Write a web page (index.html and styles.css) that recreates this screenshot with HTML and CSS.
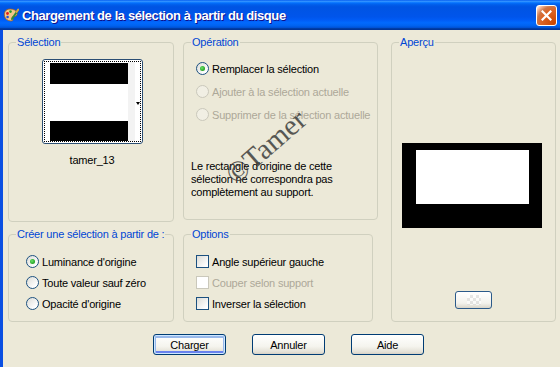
FILE: index.html
```html
<!DOCTYPE html>
<html lang="fr">
<head>
<meta charset="utf-8">
<title>Chargement de la sélection à partir du disque</title>
<link rel="stylesheet" href="styles.css">
</head>
<body>
<div class="window">
  <div class="titlebar">
    <svg class="app-icon" width="16" height="16" viewBox="0 0 16 16">
      <path d="M7 2 C2 2 1 6 1.5 9 C2 12 5 14 8 14 C10 14 10.5 12.5 9.5 11.5 C8.5 10.5 9 9.5 10.5 9.5 C13 9.5 14.5 8.5 14 6 C13.5 3.5 10.5 2 7 2 Z" fill="#F2C78A" stroke="#9A5A1E" stroke-width="0.8"/>
      <circle cx="4.5" cy="6.5" r="1.4" fill="#E0201C"/>
      <circle cx="7.5" cy="4.6" r="1.3" fill="#2A9B2A"/>
      <circle cx="4.6" cy="10" r="1.3" fill="#2050D8"/>
      <path d="M9 12 L15 3" stroke="#2E8B3A" stroke-width="2" stroke-linecap="round"/>
      <path d="M13.6 5 L15.2 2.6" stroke="#D9A640" stroke-width="2" stroke-linecap="round"/>
    </svg>
    <span class="title">Chargement de la sélection à partir du disque</span>
    <div class="close">
      <svg width="11" height="11" viewBox="0 0 11 11"><path d="M1.5 1.5 L9.5 9.5 M9.5 1.5 L1.5 9.5" stroke="#fff" stroke-width="2.2" stroke-linecap="square"/></svg>
    </div>
  </div>
  <div class="client">
    <div class="groups">
      <fieldset class="group g-selection">
        <legend>Sélection</legend>
        <div class="thumb">
          <div class="thumb-focus">
            <div class="thumb-img">
              <div class="bar bar-top"></div>
              <div class="bar bar-bottom"></div>
            </div>
            <div class="thumb-strip"></div>
            <div class="thumb-arrow"></div>
          </div>
        </div>
        <div class="thumb-name">tamer_13</div>
      </fieldset>

      <fieldset class="group g-operation">
        <legend>Opération</legend>
        <div class="opt-list op-list">
          <div class="opt"><span class="radio checked"><span class="dot"></span></span><span>Remplacer la sélection</span></div>
          <div class="opt disabled"><span class="radio"></span><span>Ajouter à la sélection actuelle</span></div>
          <div class="opt disabled"><span class="radio"></span><span>Supprimer de la sélection actuelle</span></div>
        </div>
        <p class="note">Le rectangle d'origine de cette<br>sélection ne correspondra pas<br>complètement au support.</p>
        <span class="watermark">©Tamer</span>
      </fieldset>

      <fieldset class="group g-preview">
        <legend>Aperçu</legend>
        <div class="preview"><div class="preview-inner"></div></div>
        <div class="mini-btn"><span class="checker"></span></div>
      </fieldset>

      <fieldset class="group g-create">
        <legend>Créer une sélection à partir de :</legend>
        <div class="opt-list create-list">
          <div class="opt"><span class="radio checked"><span class="dot"></span></span><span>Luminance d'origine</span></div>
          <div class="opt"><span class="radio"></span><span>Toute valeur sauf zéro</span></div>
          <div class="opt"><span class="radio"></span><span>Opacité d'origine</span></div>
        </div>
      </fieldset>

      <fieldset class="group g-options">
        <legend>Options</legend>
        <div class="opt-list options-list">
          <div class="opt"><span class="check"></span><span>Angle supérieur gauche</span></div>
          <div class="opt disabled"><span class="check"></span><span>Couper selon support</span></div>
          <div class="opt"><span class="check"></span><span>Inverser la sélection</span></div>
        </div>
      </fieldset>
    </div>
    <div class="buttons">
      <button class="btn default">Charger</button>
      <button class="btn">Annuler</button>
      <button class="btn">Aide</button>
    </div>
  </div>
</div>
</body>
</html>
```

FILE: styles.css
```css
* { box-sizing: border-box; }
html, body { margin: 0; padding: 0; }
body {
  width: 560px;
  height: 367px;
  overflow: hidden;
  font-family: "Liberation Sans", Arial, sans-serif;
  font-size: 11px;
  letter-spacing: -0.2px;
  color: #000;
  background: #ECE9D8;
}
.window {
  width: 560px;
  height: 367px;
  display: flex;
  flex-direction: column;
  background: #ECE9D8;
}
.titlebar {
  height: 30px;
  flex: none;
  display: flex;
  align-items: center;
  padding-left: 3px;
  background: linear-gradient(to bottom, #0058EE 0%, #3593FF 4%, #288EFF 6%, #127DFF 8%, #036FFC 10%, #0262EE 14%, #0057E5 20%, #0054E3 24%, #0055EB 56%, #005BF5 66%, #026AFE 76%, #0062EF 86%, #0052D6 92%, #0040AB 94%, #003092 100%);
}
.app-icon { flex: none; margin-top: -1px; }
.title {
  margin-left: 3px;
  color: #fff;
  font-weight: bold;
  font-size: 13px;
  letter-spacing: -0.4px;
  text-shadow: 1px 1px 0 #0F1089;
}
.close {
  margin-left: auto;
  margin-right: 3px;
  width: 21px;
  height: 21px;
  border: 1px solid #fff;
  border-radius: 3px;
  display: flex;
  align-items: center;
  justify-content: center;
  background: radial-gradient(circle at 90% 90%, #CC4600 0%, #DC6527 55%, #CD7546 70%, #FFCCB2 90%, #fff 100%);
}
.client {
  flex: 1;
  border-left: 3px solid #0A4FE2;
  display: flex;
  flex-direction: column;
}
.groups {
  display: grid;
  grid-template-columns: 166px 195px 169px;
  grid-template-rows: 186px 94px;
  column-gap: 9px;
  row-gap: 6px;
  padding: 6px 0 0 5px;
}
.group {
  margin: 0;
  padding: 0;
  min-width: 0;
  border: 1px solid #D0D0BF;
  border-radius: 4px;
  position: relative;
}
.group legend {
  margin-left: 7px;
  padding: 0 1px;
  color: #0046D5;
  line-height: 13px;
}
.g-selection {
  grid-column: 1;
  grid-row: 1;
  display: flex;
  flex-direction: column;
  align-items: center;
}
.g-operation {
  grid-column: 2;
  grid-row: 1;
  margin-bottom: 2px;
}
.g-preview {
  grid-column: 3;
  grid-row: 1 / span 2;
  margin-left: 4px;
  display: flex;
  flex-direction: column;
  align-items: center;
}
.g-create { grid-column: 1; grid-row: 2; }
.g-options { grid-column: 2; grid-row: 2; margin-right: 5px; }

/* thumbnail */
.thumb {
  margin-top: 10px;
  margin-left: 2px;
  width: 101px;
  height: 85px;
  border: 1px solid #2B4E73;
  border-radius: 3px;
  background: #fff;
  padding: 1px;
}
.thumb-focus {
  height: 100%;
  border: 1px dotted #000;
  display: flex;
  padding-left: 5px;
}
.thumb-img {
  width: 78px;
  display: flex;
  flex-direction: column;
  justify-content: space-between;
  padding: 1px 0 0;
}
.bar { background: #000; }
.bar-top { height: 21px; }
.bar-bottom { height: 20px; }
.thumb-strip { width: 7px; background: #F3F3F3; }
.thumb-arrow {
  align-self: center;
  margin-left: 1px;
  margin-top: 4px;
  width: 0;
  height: 0;
  border-left: 2.5px solid transparent;
  border-right: 2.5px solid transparent;
  border-top: 3px solid #000;
}
.thumb-name {
  margin-top: 10px;
  margin-left: 2px;
  line-height: 13px;
}

/* options */
.opt-list { display: flex; flex-direction: column; }
.opt {
  display: flex;
  align-items: center;
  gap: 3px;
  white-space: nowrap;
}
.op-list { margin-top: 8px; padding-left: 12px; }
.op-list .opt { height: 23px; }
.create-list { margin-top: 10px; padding-left: 17px; }
.create-list .opt, .options-list .opt { height: 21px; }
.options-list { margin-top: 10px; padding-left: 12px; }
.opt.disabled { color: #ACA899; }

.radio {
  flex: none;
  width: 13px;
  height: 13px;
  border-radius: 50%;
  border: 1px solid #1C5180;
  background: linear-gradient(135deg, #DCDCD7 0%, #FFFFFF 80%);
  display: flex;
  align-items: center;
  justify-content: center;
}
.opt.disabled .radio {
  border-color: #CAC8BB;
  background: #F1EFE4;
}
.dot {
  width: 5px;
  height: 5px;
  border-radius: 50%;
  background: radial-gradient(circle at 40% 40%, #6BE36B 0%, #2CA92C 60%, #1E8A1E 100%);
}
.check {
  flex: none;
  width: 13px;
  height: 13px;
  border: 1px solid #1C5180;
  background: linear-gradient(135deg, #DCDCD7 0%, #FFFFFF 85%);
}
.opt.disabled .check {
  border-color: #CAC8BB;
  background: #fff;
}

.note {
  margin: 34px 0 0;
  padding-left: 7px;
  line-height: 13px;
}
.watermark {
  position: absolute;
  left: 82px;
  top: 98px;
  transform: translate(-50%, -50%) rotate(-41deg);
  font-family: "Liberation Serif", "Times New Roman", serif;
  font-size: 29px;
  letter-spacing: 0;
  color: #3E3E3C;
  opacity: 0.85;
  white-space: nowrap;
  pointer-events: none;
}

/* preview */
.preview {
  margin-top: 94px;
  margin-left: -3px;
  width: 140px;
  height: 85px;
  background: #000;
  padding: 7px 13px 24px 14px;
}
.preview-inner { width: 100%; height: 100%; background: #fff; }
.mini-btn {
  margin-top: 63px;
  width: 37px;
  height: 18px;
  border: 1px solid #2B5A8A;
  border-radius: 3px;
  background: linear-gradient(to bottom, #FFFFFF 0%, #F3F2EC 70%, #D8D4C8 100%);
  display: flex;
  align-items: center;
  justify-content: center;
}
.checker {
  width: 14px;
  height: 10px;
  opacity: 0.6;
  background:
    repeating-conic-gradient(#D8D8D8 0% 25%, #FFFFFF 0% 50%) 0 0 / 6px 6px;
}

/* buttons */
.buttons {
  display: flex;
  gap: 26px;
  padding-left: 150px;
  margin-top: 12px;
}
.btn {
  width: 73px;
  height: 21px;
  margin: 0;
  padding: 0;
  font-family: "Liberation Sans", Arial, sans-serif;
  font-size: 11px;
  letter-spacing: -0.2px;
  color: #000;
  border: 1px solid #003C74;
  border-radius: 3px;
  background: linear-gradient(to bottom, #FFFFFF 0%, #F5F4EE 60%, #E3E0D5 90%, #D6D0C5 100%);
}
.btn.default {
  box-shadow: inset 0 0 0 1px #CEE7FF, inset 0 1px 0 2px #98B8EA, inset 0 -1px 0 2px #6982EE;
}
```
